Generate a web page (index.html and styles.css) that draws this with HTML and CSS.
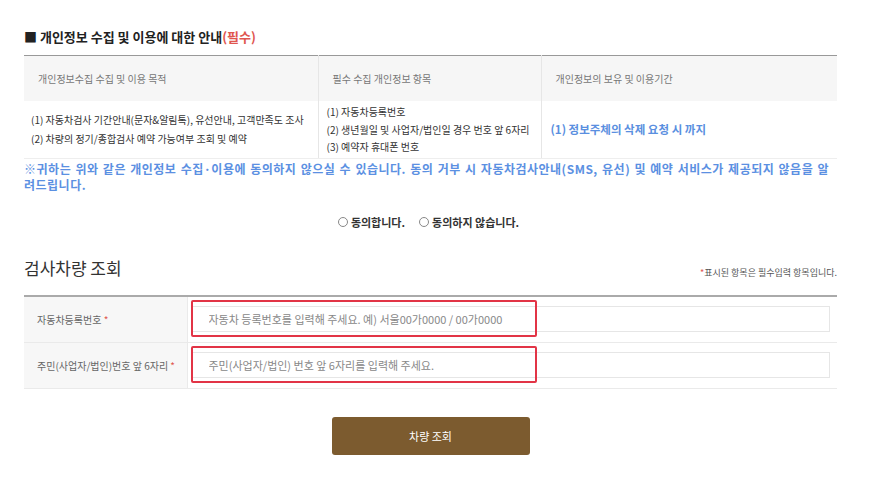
FILE: index.html
```html
<!DOCTYPE html>
<html>
<head>
  <meta charset="utf-8">
  <link rel="stylesheet" href="styles.css">
</head>
<body>
<div class="wrap">
  <h3 class="tit">■ 개인정보 수집 및 이용에 대한 안내<span class="req">(필수)</span></h3>
  <table class="info">
    <colgroup>
      <col style="width:294px">
      <col style="width:223px">
      <col>
    </colgroup>
    <tr class="head">
      <th>개인정보수집 수집 및 이용 목적</th>
      <th>필수 수집 개인정보 항목</th>
      <th>개인정보의 보유 및 이용기간</th>
    </tr>
    <tr class="body">
      <td class="c1">
        <p>(1) 자동차검사 기간안내(문자&amp;알림톡), 유선안내, 고객만족도 조사</p>
        <p>(2) 차량의 정기/종합검사 예약 가능여부 조회 및 예약</p>
      </td>
      <td class="c2">
        <p>(1) 자동차등록번호</p>
        <p>(2) 생년월일 및 사업자/법인일 경우 번호 앞 6자리</p>
        <p>(3) 예약자 휴대폰 번호</p>
      </td>
      <td class="c3">(1) 정보주체의 삭제 요청 시 까지</td>
    </tr>
  </table>
  <p class="notice">※귀하는 위와 같은 개인정보 수집·이용에 동의하지 않으실 수 있습니다. 동의 거부 시 자동차검사안내(SMS, 유선) 및 예약 서비스가 제공되지 않음을 알려드립니다.</p>

  <div class="agree">
    <label><span class="radio"></span>동의합니다.</label>
    <label><span class="radio"></span>동의하지 않습니다.</label>
  </div>

  <div class="sec-head">
    <h2>검사차량 조회</h2>
    <p class="guide"><span class="star">*</span>표시된 항목은 필수입력 항목입니다.</p>
  </div>

  <table class="form">
    <tr>
      <th>자동차등록번호 <span class="star">*</span></th>
      <td>
        <div class="field">
          <input type="text" placeholder="자동차 등록번호를 입력해 주세요. 예) 서울00가0000 / 00가0000">
          <span class="mark"></span>
        </div>
      </td>
    </tr>
    <tr>
      <th>주민(사업자/법인)번호 앞 6자리 <span class="star">*</span></th>
      <td>
        <div class="field">
          <input type="text" placeholder="주민(사업자/법인) 번호 앞 6자리를 입력해 주세요.">
          <span class="mark"></span>
        </div>
      </td>
    </tr>
  </table>

  <div class="btns">
    <button class="btn">차량 조회</button>
  </div>
</div>
</body>
</html>
```

FILE: styles.css
```css
* {
  box-sizing: border-box;
}
body {
  margin: 0;
  background: #fff;
  font-family: "Noto Sans CJK KR", "Noto Sans", sans-serif;
  color: #333;
}
.wrap {
  width: 813px;
  margin-left: 24px;
  padding-top: 27px;
}
.tit {
  margin: 0;
  font-size: 13px;
  line-height: 20px;
  font-weight: bold;
  color: #222;
}
.tit .req {
  color: #e0564f;
}
.info {
  width: 100%;
  margin-top: 8px;
  border-collapse: collapse;
  border-top: 1px solid #999;
  table-layout: fixed;
}
.info th {
  height: 45px;
  background: #f6f6f6;
  font-size: 10px;
  font-weight: normal;
  color: #777;
  text-align: left;
  padding-left: 14px;
  border-left: 1px solid #e6e6e6;
}
.info th:first-child,
.info td:first-child {
  border-left: 0;
}
.info td {
  height: 58px;
  font-size: 10px;
  color: #333;
  vertical-align: middle;
  border-left: 1px solid #e6e6e6;
  border-bottom: 1px solid #eee;
}
.info p {
  margin: 0;
}
.info .c1 {
  padding-left: 7px;
  line-height: 19px;
}
.info .c2 {
  padding-left: 8px;
  line-height: 17.5px;
}
.info .c3 {
  padding-left: 9px;
  font-size: 11.5px;
  font-weight: bold;
  color: #5a8fe0;
}
.notice {
  margin: 2px 0 0;
  font-size: 12px;
  line-height: 16px;
  font-weight: bold;
  letter-spacing: 0.5px;
  word-spacing: 1px;
  color: #5b90e2;
  text-align: justify;
  padding-right: 8px;
}
.agree {
  display: flex;
  justify-content: center;
  gap: 14px;
  margin-top: 21px;
  padding-right: 4px;
  font-size: 11px;
  font-weight: bold;
  color: #333;
}
.agree label {
  display: flex;
  align-items: center;
  gap: 3px;
}
.radio {
  width: 10px;
  height: 10px;
  border: 1px solid #888;
  border-radius: 50%;
  background: #fff;
}
.sec-head {
  display: flex;
  justify-content: space-between;
  align-items: flex-end;
  margin-top: 26px;
}
.sec-head h2 {
  margin: 0;
  font-size: 17px;
  line-height: 24px;
  font-weight: normal;
  color: #333;
}
.guide {
  margin: 0 0 1px;
  font-size: 9px;
  color: #555;
}
.star {
  color: #e0564f;
}
.form {
  width: 100%;
  margin-top: 15px;
  border-collapse: collapse;
  border-top: 2px solid #aaa;
}
.form th {
  width: 163px;
  height: 46px;
  background: #f7f7f7;
  font-size: 10px;
  font-weight: normal;
  color: #666;
  text-align: left;
  padding-left: 13px;
  border-bottom: 1px solid #eaeaea;
  border-right: 1px solid #eaeaea;
}
.form td {
  padding: 0 7px 0 4px;
  border-bottom: 1px solid #eaeaea;
}
.field {
  position: relative;
}
.field input {
  display: block;
  width: 100%;
  height: 26px;
  border: 1px solid #e6e6e6;
  padding: 0 16px;
  font-family: inherit;
  font-size: 11px;
  color: #333;
  background: #fff;
}
.field input::placeholder {
  color: #888;
}
.mark {
  position: absolute;
  left: -1px;
  top: -6px;
  width: 346px;
  height: 37px;
  border: 2px solid #e23446;
  border-radius: 2px;
  pointer-events: none;
}
.btns {
  display: flex;
  justify-content: center;
  margin-top: 28px;
}
.btn {
  width: 198px;
  height: 38px;
  border: 0;
  border-radius: 3px;
  background: #7c5b2f;
  color: #fff;
  font-family: inherit;
  font-size: 11px;
  cursor: pointer;
}
```
